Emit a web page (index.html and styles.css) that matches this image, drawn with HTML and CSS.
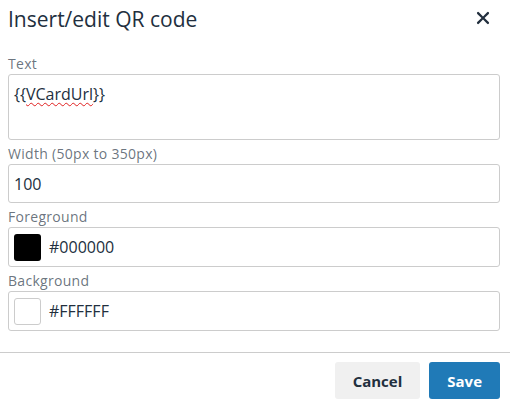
FILE: index.html
```html
<!DOCTYPE html>
<html lang="en">
<head>
<meta charset="utf-8">
<title>Insert/edit QR code</title>
<link rel="stylesheet" href="styles.css">
</head>
<body>
<div class="dialog">
  <div class="header">
    <h1 class="title">Insert/edit QR code</h1>
    <button class="close" aria-label="Close">
      <svg width="26" height="26" viewBox="0 0 24 24"><path fill="#222f3e" d="M17.3 8.2L13.4 12l3.9 3.8a1 1 0 0 1-1.5 1.5L12 13.4l-3.8 3.9a1 1 0 0 1-1.5-1.5l3.9-3.8-3.9-3.8a1 1 0 0 1 1.5-1.5l3.8 3.9 3.8-3.9a1 1 0 0 1 1.5 1.5z"/></svg>
    </button>
  </div>
  <div class="body">
    <div class="field field-area">
      <div class="label">Text</div>
      <div class="textarea">{{<span class="misspelled">VCardUrl</span>}}</div>
    </div>
    <div class="field">
      <div class="label">Width (50px to 350px)</div>
      <div class="input">100</div>
    </div>
    <div class="field">
      <div class="label">Foreground</div>
      <div class="input color-input"><span class="swatch swatch-black"></span>#000000</div>
    </div>
    <div class="field">
      <div class="label">Background</div>
      <div class="input color-input"><span class="swatch swatch-white"></span>#FFFFFF</div>
    </div>
  </div>
  <div class="footer">
    <button class="btn btn-secondary">Cancel</button>
    <button class="btn btn-primary">Save</button>
  </div>
</div>
</body>
</html>
```
FILE: styles.css
```css
html, body {
  margin: 0;
  padding: 0;
  background: #fff;
}
body {
  font-family: "Open Sans", "Noto Sans", sans-serif;
  color: #222f3e;
}
.dialog {
  width: 510px;
  height: 408px;
  display: flex;
  flex-direction: column;
  box-sizing: border-box;
}
.header {
  display: flex;
  justify-content: space-between;
  align-items: flex-start;
  padding: 5px 14px 0 8px;
  height: 33px;
  box-sizing: border-box;
}
.title {
  margin: 0;
  font-size: 21px;
  line-height: 28px;
  font-weight: 400;
  color: #222f3e;
}
.close {
  border: 0;
  background: transparent;
  padding: 0;
  width: 26px;
  height: 26px;
  display: flex;
}
.body {
  padding: 21px 10px 0 8px;
}
.field + .field {
  margin-top: 4px;
}
.field-area {
  margin-bottom: 1px;
}
.label {
  font-size: 14px;
  line-height: 20px;
  letter-spacing: 0.3px;
  color: rgba(34, 47, 62, 0.68);
}
.textarea,
.input {
  box-sizing: border-box;
  border: 1px solid #cccccc;
  border-radius: 3px;
  font-size: 16px;
  line-height: 24px;
  color: #222f3e;
  padding: 0 5px;
}
.textarea {
  height: 66px;
  padding-top: 7px;
}
.misspelled {
  text-decoration: underline wavy #e02020;
  text-decoration-thickness: 1px;
  text-underline-offset: 2px;
}
.input {
  height: 39px;
  display: flex;
  align-items: center;
}
.color-input {
  height: 40px;
}
.swatch {
  width: 27px;
  height: 27px;
  border-radius: 3px;
  box-sizing: border-box;
  margin-right: 8px;
  flex: none;
}
.swatch-black {
  background: #000;
}
.swatch-white {
  background: #fff;
  border: 1px solid #cccccc;
}
.footer {
  margin-top: 21px;
  border-top: 1px solid #cccccc;
  display: flex;
  justify-content: flex-end;
  gap: 9px;
  padding: 9px 10px 8px;
}
.btn {
  height: 37px;
  border: 0;
  border-radius: 3px;
  font-family: "Open Sans", "Noto Sans", sans-serif;
  font-size: 15px;
  font-weight: 700;
  padding: 0 18px;
  cursor: pointer;
}
.btn-secondary {
  background: #f0f0f0;
  color: #222f3e;
}
.btn-primary {
  background: #207ab7;
  color: #fff;
}
```
